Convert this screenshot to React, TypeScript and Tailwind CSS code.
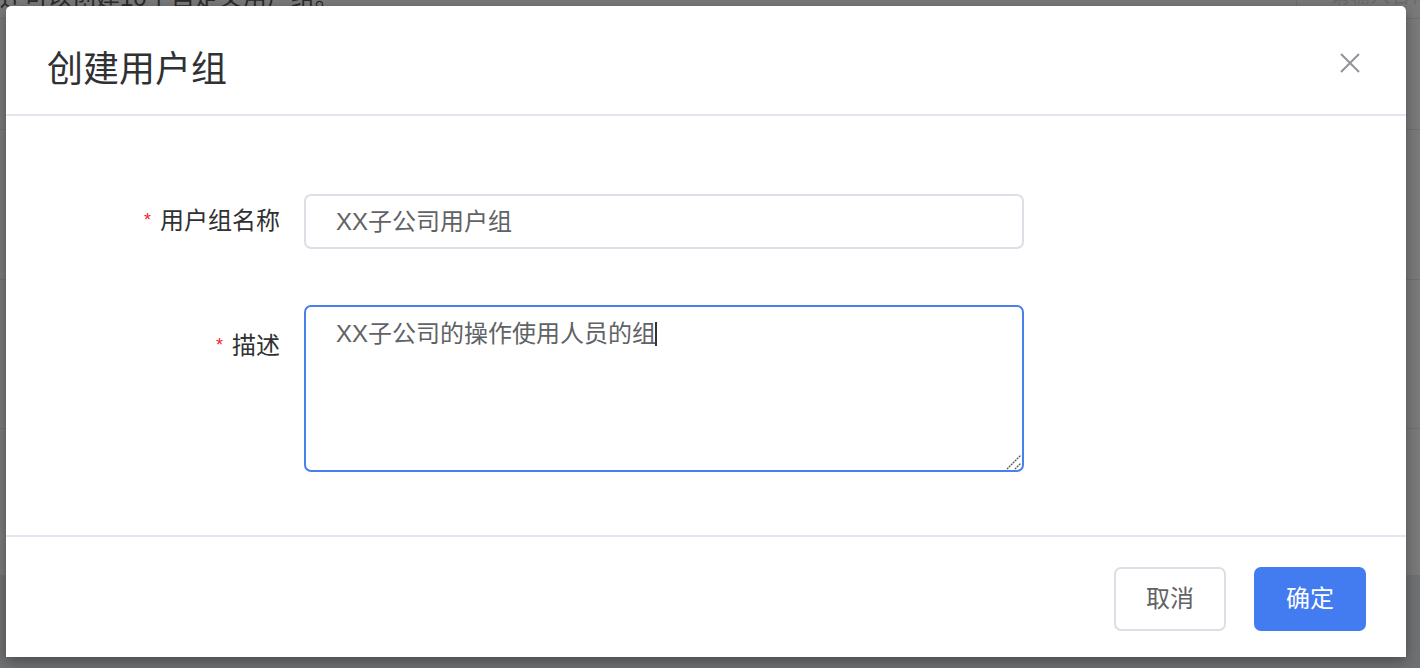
import React from "react";

const FONT = '"Liberation Sans", "Noto Sans CJK SC", sans-serif';

export default function App() {
  return (
    <div
      className="relative w-[1420px] h-[668px] overflow-hidden bg-[#7a7a7a]"
      style={{ fontFamily: FONT }}
    >
      {/* dimmed page behind */}
      <div className="flex flex-col w-full h-full">
        <div className="relative h-[19px] border-b border-[#6f6f6f]">
          <div className="absolute left-0 top-[-17px] text-[24px] leading-[30px] text-[#2b2b2b] whitespace-nowrap">
            还可以创建10个自定义用户组。
          </div>
          <div className="absolute left-[1296px] top-0 h-[19px] border-l border-[#6f6f6f]" />
          <div className="absolute left-[1330px] top-[-14px] text-[20px] leading-[20px] text-[#6b6b6b] whitespace-nowrap">
            请输入名称
          </div>
        </div>
        <div className="h-[111px] border-b border-[#707070]" />
        <div className="h-[150px] border-b border-[#707070]" />
        <div className="h-[149px] border-b border-[#707070]" />
        <div className="h-[146px]" />
        <div className="flex-1 bg-[#707174]" />
      </div>

      {/* modal */}
      <div className="absolute left-[6px] top-[6px] w-[1400px] h-[651px] bg-white rounded-t-[5px] shadow-[0_4px_14px_rgba(0,0,0,0.35)] flex flex-col">
        <div className="h-[110px] border-b-2 border-[#e2e6ee] flex items-start justify-between pl-[41px] pr-[46px] pt-[40px]">
          <div className="text-[36px] leading-[48px] text-[#303133]">创建用户组</div>
          <svg width="20" height="20" viewBox="0 0 20 20" className="mt-[7px]">
            <path d="M1 1 L19 19 M19 1 L1 19" stroke="#909399" strokeWidth="2" strokeLinecap="butt" fill="none" />
          </svg>
        </div>

        <div className="h-[419px] pt-[78px] flex flex-col gap-[56px]">
          <div className="flex items-center">
            <div className="w-[274px] text-right text-[24px] leading-[36px] text-[#303133]">
              <span className="text-[#f5222d] text-[18px] mr-[9px] relative top-[-3px]">*</span>
              用户组名称
            </div>
            <div className="ml-[24px] w-[720px] h-[55px] border-2 border-[#dcdfe6] rounded-[7px] flex items-center pl-[30px] text-[24px] text-[#606266]">
              XX子公司用户组
            </div>
          </div>
          <div className="flex items-start">
            <div className="w-[274px] text-right text-[24px] leading-[36px] text-[#303133] pt-[23px]">
              <span className="text-[#f5222d] text-[18px] mr-[9px] relative top-[-3px]">*</span>
              描述
            </div>
            <div className="relative ml-[24px]">
              <textarea
                readOnly
                defaultValue="XX子公司的操作使用人员的组"
                className="block w-[720px] h-[167px] border-2 border-[#4a7ff0] rounded-[7px] pl-[30px] pr-[10px] pt-[9px] text-[24px] leading-[36px] text-[#606266] outline-none resize-none"
                style={{ fontFamily: FONT }}
              />
              <div className="absolute left-[351px] top-[17px] w-[2px] h-[24px] bg-[#333]" />
              <svg
                width="16"
                height="16"
                viewBox="0 0 16 16"
                className="absolute right-[2px] bottom-[2px]"
              >
                <path d="M1 15 L15 1 M9 15 L15 9" stroke="#555" strokeWidth="1.3" strokeDasharray="2 0.8" fill="none" />
              </svg>
            </div>
          </div>
        </div>

        <div className="border-t-2 border-[#e2e6ee] flex justify-end gap-[28px] pr-[40px] pt-[30px]">
          <button className="w-[112px] h-[64px] border-2 border-[#dcdfe6] rounded-[7px] bg-white text-[24px] text-[#606266]">
            取消
          </button>
          <button className="w-[112px] h-[64px] rounded-[7px] bg-[#437bf1] text-[24px] text-white">
            确定
          </button>
        </div>
      </div>
    </div>
  );
}
